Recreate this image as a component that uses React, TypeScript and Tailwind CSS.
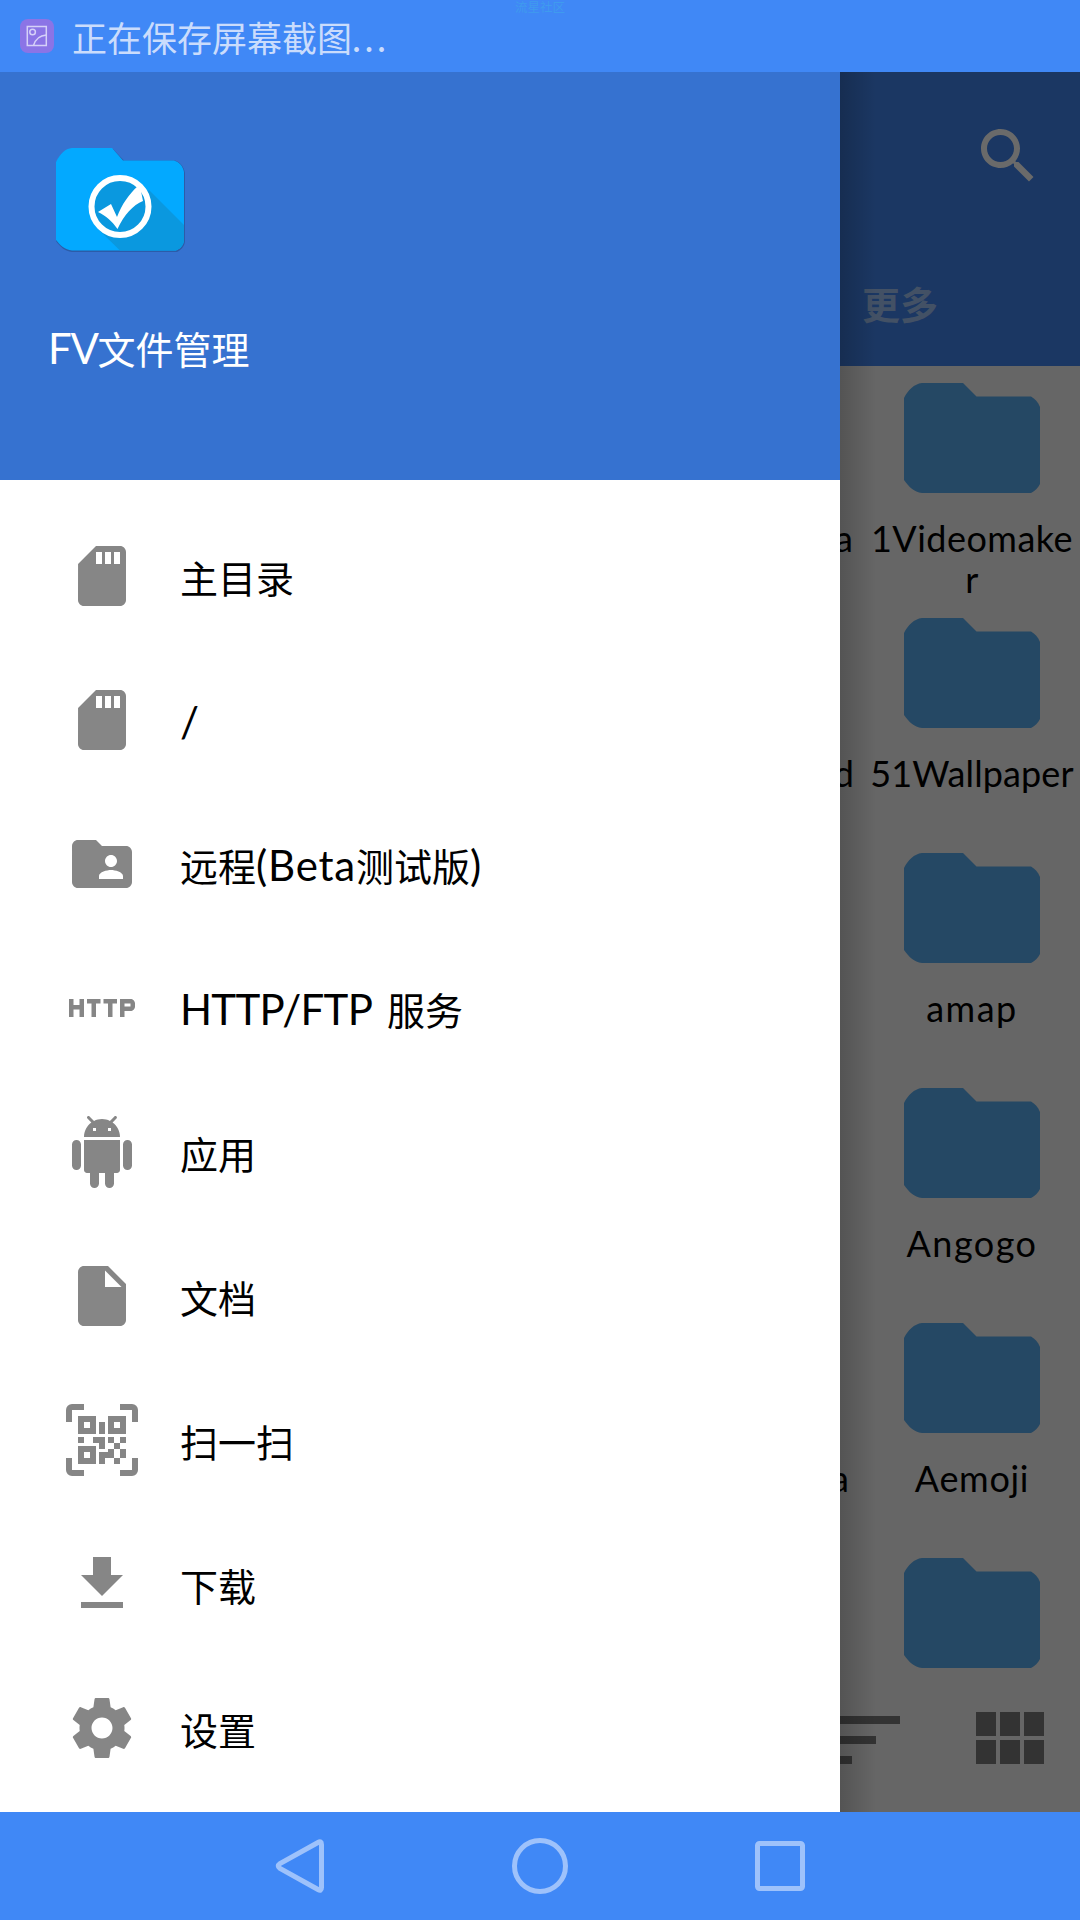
import type { ReactNode } from "react";
import { MdHttp } from "react-icons/md";

const LATIN = "font-['Lato','Noto_Sans_CJK_SC',sans-serif]";
const CJK = "font-['Noto_Sans_CJK_SC',sans-serif]";

function Icon({ d, className = "size-[72px]" }: { d: string; className?: string }) {
  return (
    <svg viewBox="0 0 24 24" fill="currentColor" fillRule="evenodd" className={className}>
      <path d={d} />
    </svg>
  );
}

const SD =
  "M18 2h-8L4.02 8 4 20c0 1.1.9 2 2 2h12c1.1 0 2-.9 2-2V4c0-1.1-.9-2-2-2zm-6 6h-2V4h2v4zm3 0h-2V4h2v4zm3 0h-2V4h2v4z";
const SHARED =
  "M20 6h-8l-2-2H4c-1.1 0-1.99.9-1.99 2L2 18c0 1.1.9 2 2 2h16c1.1 0 2-.9 2-2V8c0-1.1-.9-2-2-2zm-5 3c1.1 0 2 .9 2 2s-.9 2-2 2-2-.9-2-2 .9-2 2-2zm4 8h-8v-1c0-1.33 2.67-2 4-2s4 .67 4 2v1z";
const ANDROID =
  "M6 18c0 .55.45 1 1 1h1v3.5c0 .83.67 1.5 1.5 1.5s1.5-.67 1.5-1.5V19h2v3.5c0 .83.67 1.5 1.5 1.5s1.5-.67 1.5-1.5V19h1c.55 0 1-.45 1-1V8H6v10zM3.5 8C2.67 8 2 8.67 2 9.5v7c0 .83.67 1.5 1.5 1.5S5 17.33 5 16.5v-7C5 8.67 4.33 8 3.5 8zm17 0c-.83 0-1.5.67-1.5 1.5v7c0 .83.67 1.5 1.5 1.5s1.5-.67 1.5-1.5v-7c0-.83-.67-1.5-1.5-1.5zm-4.97-5.84l1.3-1.3c.2-.2.2-.51 0-.71-.2-.2-.51-.2-.71 0l-1.48 1.48C13.85 1.23 12.95 1 12 1c-.96 0-1.86.23-2.66.63L7.85.15c-.2-.2-.51-.2-.71 0-.2.2-.2.51 0 .71l1.31 1.31C6.97 3.26 6 5.01 6 7h12c0-1.99-.97-3.75-2.47-4.84zM10 5H9V4h1v1zm5 0h-1V4h1v1z";
const FILE =
  "M6 2c-1.1 0-1.99.9-1.99 2L4 20c0 1.1.89 2 1.99 2H18c1.1 0 2-.9 2-2V8l-6-6H6zm7 7V3.5L18.5 9H13z";
const SCAN =
  "M2 0h4v2H2v4H0V2a2 2 0 0 1 2-2zM18 0h4a2 2 0 0 1 2 2v4h-2V2h-4zM0 18h2v4h4v2H2a2 2 0 0 1-2-2zM22 18h2v4a2 2 0 0 1-2 2h-4v-2h4zM4 4h6v6H4zM6 6v2h2V6zM14 4h6v6h-6zM16 6v2h2V6zM4 14h6v6H4zM6 16v2h2v-2zM11 6h2v4h-2zM4 11h2v2H4zM9 11h4v4h-2v-2H9zM14 11h2v2h-2zM18 11h2v2h-2zM16 13h2v2h-2zM14 15h2v3h-3v2h-2v-4h3zM18 15h2v3h-2zM16 18h2v2h-2z";
const DOWNLOAD = "M19 9h-4V3H9v6H5l7 7 7-7zM5 18v2h14v-2H5z";
const SETTINGS =
  "M19.43 12.98c.04-.32.07-.64.07-.98s-.03-.66-.07-.98l2.11-1.65c.19-.15.24-.42.12-.64l-2-3.46c-.12-.22-.39-.3-.61-.22l-2.49 1c-.52-.4-1.08-.73-1.69-.98l-.38-2.65C14.46 2.18 14.25 2 14 2h-4c-.25 0-.46.18-.49.42l-.38 2.65c-.61.25-1.17.59-1.69.98l-2.49-1c-.23-.09-.49 0-.61.22l-2 3.46c-.13.22-.07.49.12.64l2.11 1.65c-.04.32-.07.65-.07.98s.03.66.07.98l-2.11 1.65c-.19.15-.24.42-.12.64l2 3.46c.12.22.39.3.61.22l2.49-1c.52.4 1.08.73 1.69.98l.38 2.65c.03.24.24.42.49.42h4c.25 0 .46-.18.49-.42l.38-2.65c.61-.25 1.17-.59 1.69-.98l2.49 1c.23.09.49 0 .61-.22l2-3.46c.12-.22.07-.49-.12-.64l-2.11-1.65zM12 15.5c-1.93 0-3.5-1.57-3.5-3.5s1.57-3.5 3.5-3.5 3.5 1.57 3.5 3.5-1.57 3.5-3.5 3.5z";
const SEARCH =
  "M15.5 14h-.79l-.28-.27C15.41 12.59 16 11.11 16 9.5 16 5.91 13.09 3 9.5 3S3 5.91 3 9.5 5.91 16 9.5 16c1.61 0 3.09-.59 4.23-1.57l.27.28v.79l5 4.99L20.49 19l-4.99-5zm-6 0C7.01 14 5 11.99 5 9.5S7.01 5 9.5 5 14 7.01 14 9.5 11.99 14 9.5 14z";
const SORT = "M3 18h6v-2H3v2zM3 6v2h18V6H3zm0 7h12v-2H3v2z";
const MODULES =
  "M4 11h5V5H4v6zm0 7h5v-6H4v6zm6 0h5v-6h-5v6zm6 0h5v-6h-5v6zm-6-7h5V5h-5v6zm6-6v6h5V5h-5z";

function L({ children, className = "" }: { children: ReactNode; className?: string }) {
  return <span className={`${LATIN} text-[42px] ${className}`}>{children}</span>;
}

const menu: { icon: ReactNode; label: ReactNode }[] = [
  { icon: <Icon d={SD} />, label: "主目录" },
  { icon: <Icon d={SD} />, label: <L>/</L> },
  {
    icon: <Icon d={SHARED} />,
    label: (
      <>
        远程<L className="tracking-[0.800px]">(Beta</L>测试版<L>)</L>
      </>
    ),
  },
  {
    icon: <MdHttp className="size-[72px]" />,
    label: (
      <>
        <L className="tracking-[-0.700px]">HTTP/FTP</L>
        <L className="tracking-[4px]"> </L>服务
      </>
    ),
  },
  { icon: <Icon d={ANDROID} />, label: "应用" },
  { icon: <Icon d={FILE} />, label: "文档" },
  { icon: <Icon d={SCAN} />, label: "扫一扫" },
  { icon: <Icon d={DOWNLOAD} />, label: "下载" },
  { icon: <Icon d={SETTINGS} />, label: "设置" },
];

const folders = [
  { lines: ["1Videomake", "r"], prev: "a", pad: "pr-[11px]", track: "tracking-[0.500px]" },
  { lines: ["51Wallpaper"], prev: "d", pad: "pr-[10px]", track: "tracking-[0.100px]" },
  { lines: ["amap"], prev: "", pad: "", track: "tracking-[1.500px]" },
  { lines: ["Angogo"], prev: "", pad: "", track: "tracking-[1.500px]" },
  { lines: ["Aemoji"], prev: "a", pad: "pr-[15px]", track: "tracking-[0.700px]" },
  { lines: [], prev: "", pad: "", track: "" },
];

function StatusBar() {
  return (
    <header className="relative flex h-[72px] shrink-0 items-center bg-[#4088f6] pl-[20px]">
      <svg viewBox="0 0 34 34" className="size-[34px]" fill="none">
        <rect width="34" height="34" rx="8" fill="#8b74e6" />
        <g stroke="#d5d0f8" strokeWidth="1.5">
          <rect x="7.3" y="7.5" width="19" height="19" />
          <circle cx="12.6" cy="13" r="2.8" />
          <path d="M13.5 26.5C15.500 20 19.500 16.500 26.300 16" />
        </g>
      </svg>
      <span className={`${CJK} ml-[18px] whitespace-pre pt-[1px] text-[35px] leading-none text-[#cadcfc]`}>
        正在保存屏幕截图<span className={`${LATIN} text-[38px] tracking-[3.500px]`}>...</span>
      </span>
      <span className={`${CJK} absolute left-[515px] top-0 text-[12.500px] leading-[14px] text-[#3f9bee]`}>
        流星社区
      </span>
    </header>
  );
}

function AppLogo() {
  return (
    <svg viewBox="0 0 130 106" className="h-[106px] w-[130px]">
      <path
        d="M0 15C4 6 9 1.500 16 1H57L68 12.500H119C124 14 128 19 129 25V94C128 99 125 102 121 104H16C9 103 4 99 0 93Z"
        fill="#2c5ca8"
      />
      <path
        d="M0 14C4 6 9 .5 16 0H56L67 12.500H118C123 14 127 18 128 24V93C127 98 124 101 120 102.500H16C9 102 4 97 0 92Z"
        fill="#03a9ff"
      />
      <path d="M93 42L128 77V93C127 98 124 101 120 102.500H64L44 83Z" fill="#0a98df" />
      <circle cx="64" cy="58.500" r="28.500" fill="#0a98df" stroke="#fff" strokeWidth="6" />
      <path d="M42 64L55 56L61 69C66 56 73 46 82 38L85 43L87 53C77 57 68 67 61.500 81C56 73 50 68 42 64Z" fill="#fff" />
    </svg>
  );
}

function Drawer() {
  return (
    <aside className="flex w-[840px] shrink-0 flex-col bg-white">
      <div className="flex h-[408px] shrink-0 flex-col bg-[#3672d0] pt-[76px]">
        <div className="pl-[56px]">
          <AppLogo />
        </div>
        <div className={`${CJK} mt-[64px] h-[60px] pl-[48px] text-[38px] leading-[60px] text-white`}>
          <L className="tracking-[-1.300px]">FV</L>文件管理
        </div>
      </div>
      <nav className="flex flex-col pt-[24px]">
        {menu.map((item, i) => (
          <div key={i} className="flex h-[144px] items-center gap-[42px] pl-[66px]">
            <div className="text-[#868686]">{item.icon}</div>
            <div className={`${CJK} mt-[2px] h-[60px] whitespace-pre text-[38px] leading-[60px] text-black`}>
              {item.label}
            </div>
          </div>
        ))}
      </nav>
    </aside>
  );
}

function Folder() {
  return (
    <svg viewBox="0 0 136 110" className="h-[110px] w-[136px]">
      <path
        d="M0 15C4 7 10 1 18 0H59L72.500 13.500H127C131 16 134 19 136 24V101C134 105 131 108 127 110H18C10 109 5 104 0 97Z"
        fill="#254864"
      />
    </svg>
  );
}

function Browser() {
  return (
    <main className="relative flex min-w-0 flex-1 flex-col overflow-hidden bg-[#666666]">
      <div className="flex h-[294px] shrink-0 flex-col justify-between bg-[#1b3763] pt-[48px] pb-[33px]">
        <div className="flex justify-end pr-[36px] text-[#6a6a6a]">
          <Icon d={SEARCH} />
        </div>
        <div className={`${CJK} pl-[22px] text-[38px] font-bold leading-[60px] text-[#435165]`}>更多</div>
      </div>
      <div className="flex h-[1326px] shrink-0 flex-col overflow-hidden">
        {folders.map((f, i) => (
          <div key={i} className="grid h-[235px] shrink-0 grid-cols-[24px_216px] pt-[17px]">
            <div
              className={`${LATIN} ${f.pad} flex justify-end overflow-hidden pt-[135px] text-[36px] leading-[41px] text-black`}
            >
              {f.prev}
            </div>
            <div className="flex flex-col items-center">
              <Folder />
              <div className={`${LATIN} ${f.track} mt-[25px] text-center text-[36px] leading-[41px] text-black`}>
                {f.lines.map((t) => (
                  <div key={t}>{t}</div>
                ))}
              </div>
            </div>
          </div>
        ))}
      </div>
      <div className="flex justify-between pr-[24px] text-[#333333]">
        <Icon d={SORT} className="-ml-[24px] size-[96px]" />
        <Icon d={MODULES} className="size-[96px]" />
      </div>
      <div className="absolute inset-y-0 left-0 w-[36px] bg-linear-to-r from-black/18 to-transparent" />
    </main>
  );
}

function NavBar() {
  return (
    <footer className="flex h-[108px] shrink-0 items-center justify-center gap-[180px] bg-[#4088f6]">
      {[
        <path key="back" d="M48 6.500Q51.500 4.500 51.500 8.500V51.500Q51.500 55.500 48 53.500L10 32.500Q6.500 30 10 27.500Z" />,
        <circle key="home" cx="30" cy="30" r="25.500" />,
        <rect key="recent" x="7.500" y="7.500" width="45" height="45" rx="2" />,
      ].map((shape, i) => (
        <svg key={i} viewBox="0 0 60 60" className="size-[60px]" fill="none" stroke="#9ec2fb" strokeWidth="5">
          {shape}
        </svg>
      ))}
    </footer>
  );
}

export default function App() {
  return (
    <div className="flex h-[1920px] w-[1080px] flex-col overflow-hidden">
      <StatusBar />
      <div className="flex h-[1740px] shrink-0">
        <Drawer />
        <Browser />
      </div>
      <NavBar />
    </div>
  );
}
